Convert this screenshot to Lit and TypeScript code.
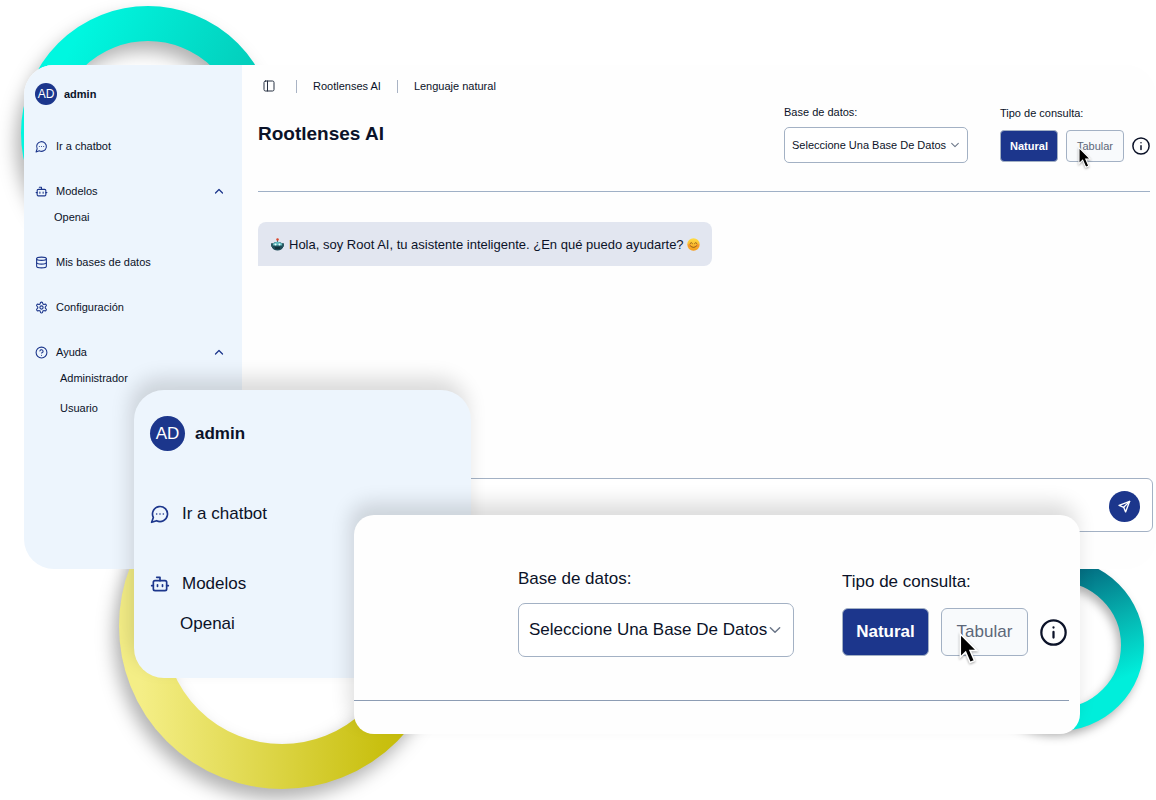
import { LitElement, html, css, svg, nothing } from "lit";
import { customElement, property } from "lit/decorators.js";

const ICONS: Record<string, unknown> = {
  chat: svg`<path d="M7.9 20A9 9 0 1 0 4 16.100L2 22Z"/><path d="M8 12h.01M12 12h.01M16 12h.01"/>`,
  bot: svg`<path d="M12 8V4H8"/><rect width="16" height="12" x="4" y="8" rx="2"/><path d="M2 14h2M20 14h2M15 13v2M9 13v2"/>`,
  database: svg`<ellipse cx="12" cy="5" rx="9" ry="3"/><path d="M3 5v14a9 3 0 0 0 18 0V5"/><path d="M3 12a9 3 0 0 0 18 0"/>`,
  settings: svg`<path d="M12.22 2h-.44a2 2 0 0 0-2 2v.18a2 2 0 0 1-1 1.730l-.43.250a2 2 0 0 1-2 0l-.15-.08a2 2 0 0 0-2.730.730l-.22.380a2 2 0 0 0 .73 2.730l.15.100a2 2 0 0 1 1 1.720v.51a2 2 0 0 1-1 1.740l-.15.090a2 2 0 0 0-.73 2.730l.22.380a2 2 0 0 0 2.730.730l.15-.08a2 2 0 0 1 2 0l.43.250a2 2 0 0 1 1 1.730V20a2 2 0 0 0 2 2h.44a2 2 0 0 0 2-2v-.18a2 2 0 0 1 1-1.730l.43-.25a2 2 0 0 1 2 0l.15.080a2 2 0 0 0 2.730-.73l.22-.39a2 2 0 0 0-.73-2.730l-.15-.08a2 2 0 0 1-1-1.740v-.5a2 2 0 0 1 1-1.740l.15-.09a2 2 0 0 0 .73-2.730l-.22-.38a2 2 0 0 0-2.730-.73l-.15.080a2 2 0 0 1-2 0l-.43-.25a2 2 0 0 1-1-1.730V4a2 2 0 0 0-2-2z"/><circle cx="12" cy="12" r="3"/>`,
  help: svg`<circle cx="12" cy="12" r="10"/><path d="M9.090 9a3 3 0 0 1 5.830 1c0 2-3 3-3 3"/><path d="M12 17h.01"/>`,
  up: svg`<path d="m5 16 7-7 7 7"/>`,
  down: svg`<path d="m4 8 8 8 8-8"/>`,
  panel: svg`<rect width="20" height="20" x="2" y="2" rx="3"/><path d="M9 2v20"/>`,
  info: svg`<circle cx="12" cy="12" r="10.800"/><path d="M12 11.500v5M12 7.500v.1"/>`,
  send: svg`<path d="M21.500 2.500 2 10l8.500 3.500L14 22z"/><path d="M21.500 2.500 10.500 13.500"/>`,
};

const icon = (name: string) =>
  html`<svg class="icon icon-${name}" viewBox="0 0 24 24" aria-hidden="true">${ICONS[name]}</svg>`;

const shared = css`
  :host {
    font-family: "Liberation Sans", Arial, sans-serif;
    color: #0b1228;
    box-sizing: border-box;
  }
  * {
    box-sizing: border-box;
  }
  .icon {
    display: block;
    flex: none;
    fill: none;
    stroke: currentColor;
    stroke-width: 2;
    stroke-linecap: round;
    stroke-linejoin: round;
  }
  button,
  select,
  input {
    font: inherit;
    color: inherit;
    margin: 0;
  }
`;

interface NavItem {
  icon: string;
  label: string;
  children?: string[];
  indent?: boolean;
}

@customElement("side-nav")
export class SideNav extends LitElement {
  @property({ attribute: false }) items: NavItem[] = [];
  @property({ type: Boolean, reflect: true }) large = false;

  static styles = [
    shared,
    css`
      :host {
        display: block;
        font-size: 11px;
        line-height: 24px;
        padding: 17px 17px 24px 11px;
      }
      .user {
        display: flex;
        align-items: center;
        gap: 7px;
        font-weight: 700;
        margin-bottom: 28px;
      }
      .avatar {
        display: grid;
        place-items: center;
        width: 22px;
        height: 22px;
        border-radius: 50%;
        background: #1c368c;
        color: #fff;
        font-size: 12px;
        font-weight: 400;
        line-height: 1;
      }
      nav {
        display: flex;
        flex-direction: column;
        gap: 21px;
      }
      .item {
        display: flex;
        align-items: center;
        width: 100%;
        height: 24px;
        gap: 8px;
        padding: 0;
        border: 0;
        background: none;
        color: inherit;
        text-decoration: none;
        text-align: left;
      }
      .label {
        flex: 1;
      }
      .icon {
        width: 13px;
        height: 13px;
        color: #1c368c;
      }
      .icon-up {
        width: 12px;
        height: 12px;
        stroke-width: 2.5;
      }
      .subs {
        display: flex;
        flex-direction: column;
        gap: 6px;
        margin-top: 2px;
        padding-left: 19px;
      }
      .subs.indent {
        padding-left: 25px;
      }
      .sub {
        color: inherit;
        text-decoration: none;
        height: 24px;
      }
      :host([large]) {
        font-size: 17px;
        padding: 26px 24px 42px 16px;
      }
      :host([large]) .user {
        gap: 10px;
        margin-bottom: 51px;
      }
      :host([large]) .avatar {
        width: 35px;
        height: 35px;
        font-size: 17px;
      }
      :host([large]) nav {
        gap: 46px;
      }
      :host([large]) .item {
        gap: 12px;
      }
      :host([large]) .icon {
        width: 20px;
        height: 20px;
      }
      :host([large]) .subs {
        margin-top: 16px;
        padding-left: 30px;
      }
    `,
  ];

  render() {
    return html`
      <div class="user"><span class="avatar">AD</span><span>admin</span></div>
      <nav>
        ${this.items.map((item) => {
          if (!item.children) {
            return html`<a class="item" href="#">${icon(item.icon)}<span class="label">${item.label}</span></a>`;
          }
          return html`<div>
            <button class="item" type="button" aria-expanded="true">
              ${icon(item.icon)}<span class="label">${item.label}</span>${this.large ? nothing : icon("up")}
            </button>
            <div class="subs ${item.indent ? "indent" : ""}">
              ${item.children.map((c) => html`<a class="sub" href="#">${c}</a>`)}
            </div>
          </div>`;
        })}
      </nav>
    `;
  }
}

@customElement("query-controls")
export class QueryControls extends LitElement {
  @property({ type: Boolean, reflect: true }) large = false;

  static styles = [
    shared,
    css`
      :host {
        display: flex;
        align-items: center;
        gap: 32px;
        font-size: 11px;
        line-height: 14px;
      }
      .field {
        display: flex;
        flex-direction: column;
        gap: 8px;
      }
      .type {
        gap: 10px;
      }
      .picker {
        display: grid;
        align-items: center;
      }
      .picker > * {
        grid-area: 1 / 1;
      }
      select {
        appearance: none;
        width: 184px;
        height: 36px;
        padding: 0 7px;
        border: 1px solid #a3b1c4;
        border-radius: 5px;
        background: #fff;
      }
      .icon-down {
        justify-self: end;
        width: 10px;
        height: 10px;
        margin-right: 8px;
        color: #6b7688;
        stroke-width: 2.5;
        pointer-events: none;
      }
      .options {
        display: flex;
        align-items: center;
        gap: 8px;
      }
      .option {
        position: relative;
        width: 58px;
        height: 32px;
        padding: 0;
        border: 1px solid #a3b1c4;
        border-radius: 4px;
        background: #f8fafc;
        color: #5c6779;
      }
      .option.active {
        background: #1c368c;
        color: #fff;
        font-weight: 700;
      }
      .cursor {
        position: absolute;
        left: 11px;
        top: 16px;
        width: 14px;
        height: 22px;
        overflow: visible;
        filter: drop-shadow(0 1px 1px rgba(0, 0, 0, 0.35));
      }
      .info {
        padding: 0;
        border: 0;
        background: none;
      }
      .icon-info {
        width: 18px;
        height: 18px;
      }
      :host([large]) {
        gap: 48px;
        font-size: 17px;
        line-height: 22px;
      }
      :host([large]) .field {
        gap: 13px;
      }
      :host([large]) .type {
        gap: 15px;
        padding-top: 2px;
      }
      :host([large]) select {
        width: 276px;
        height: 54px;
        padding: 0 10px;
        border-radius: 7px;
      }
      :host([large]) .icon-down {
        width: 14px;
        height: 14px;
        margin-right: 12px;
      }
      :host([large]) .options {
        gap: 12px;
      }
      :host([large]) .option {
        width: 87px;
        height: 48px;
        border-radius: 6px;
      }
      :host([large]) .cursor {
        left: 17px;
        top: 24px;
        width: 20px;
        height: 32px;
      }
      :host([large]) .icon-info {
        width: 27px;
        height: 27px;
      }
    `,
  ];

  render() {
    return html`
      <div class="field">
        <label for="db">Base de datos:</label>
        <div class="picker">
          <select id="db">
            <option>Seleccione Una Base De Datos</option>
          </select>
          ${icon("down")}
        </div>
      </div>
      <div class="field type" role="group" aria-labelledby="type">
        <span id="type">Tipo de consulta:</span>
        <div class="options">
          <button class="option active" type="button">Natural</button>
          <button class="option" type="button">
            Tabular
            <svg class="cursor" viewBox="0 0 20 33" aria-hidden="true">
              <path d="M1 1v24l5.500-5.300 4.600 10.800 4.600-2-4.600-10.500h6.900z" fill="#000" stroke="#fff" stroke-width="1.600"/>
            </svg>
          </button>
          <button class="info" type="button" aria-label="Información">${icon("info")}</button>
        </div>
      </div>
    `;
  }
}

const MAIN_NAV: NavItem[] = [
  { icon: "chat", label: "Ir a chatbot" },
  { icon: "bot", label: "Modelos", children: ["Openai"] },
  { icon: "database", label: "Mis bases de datos" },
  { icon: "settings", label: "Configuración" },
  { icon: "help", label: "Ayuda", children: ["Administrador", "Usuario"], indent: true },
];

@customElement("app-root")
export class AppRoot extends LitElement {
  static styles = [
    shared,
    css`
      :host {
        display: block;
        position: relative;
        min-height: 100vh;
        padding: 65px 0 0 24px;
        background: #fff;
        overflow: hidden;
      }
      .ring {
        position: absolute;
        overflow: visible;
        filter: drop-shadow(-5px 10px 9px rgba(0, 0, 0, 0.3));
      }
      .ring circle {
        fill: none;
      }
      .ring-top {
        left: 21px;
        top: 6px;
        width: 254px;
        height: 254px;
      }
      .ring-yellow {
        left: 119px;
        top: 463px;
        width: 326px;
        height: 326px;
      }
      .ring-right {
        right: 12px;
        top: 559px;
        width: 172px;
        height: 172px;
        filter: drop-shadow(-3px 5px 5px rgba(0, 0, 0, 0.3));
      }
      .window {
        position: relative;
        display: grid;
        grid-template-columns: 218px 1fr;
        min-height: 504px;
        border-radius: 30px;
        background: #fefefe;
        overflow: hidden;
      }
      .side {
        background: #edf5fd;
      }
      main {
        display: flex;
        flex-direction: column;
        padding: 0 3px 37px 16px;
      }
      .crumbs {
        display: flex;
        align-items: center;
        gap: 16px;
        height: 40px;
        padding: 2px 0 0 5px;
        font-size: 11px;
      }
      .toggle {
        padding: 0;
        margin-right: 5px;
        border: 0;
        background: none;
        color: #273042;
      }
      .icon-panel {
        width: 12px;
        height: 12px;
      }
      .bar {
        width: 1px;
        height: 13px;
        background: #a9b3c4;
      }
      .crumb {
        color: inherit;
        text-decoration: none;
      }
      .toolbar {
        display: flex;
        align-items: center;
        justify-content: space-between;
        margin-right: 3px;
        padding: 0 0 28px;
        border-bottom: 1px solid #9fb0c6;
      }
      h1 {
        margin: 0;
        font-size: 19px;
        line-height: 24px;
      }
      .bubble {
        display: flex;
        align-items: center;
        align-self: flex-start;
        height: 44px;
        margin-top: 30px;
        padding: 0 12px 0 13px;
        border-radius: 8px 8px 8px 0;
        background: #e2e6f0;
        font-size: 13px;
      }
      .emoji {
        width: 13px;
        height: 13px;
      }
      .bubble-text {
        margin: 0 3px 0 5px;
      }
      .composer {
        display: flex;
        align-items: center;
        height: 54px;
        margin-top: auto;
        padding: 2px 12px 0;
        border: 1px solid #a3b1c4;
        border-radius: 6px;
        background: #fff;
      }
      .entry {
        flex: 1;
        min-width: 0;
        height: 40px;
        border: 0;
        outline: 0;
        background: none;
        font-size: 13px;
      }
      .send {
        display: grid;
        place-items: center;
        width: 31px;
        height: 31px;
        padding: 0;
        border: 0;
        border-radius: 50%;
        background: #1c368c;
        color: #fff;
      }
      .icon-send {
        width: 13px;
        height: 13px;
        stroke-width: 2.5;
      }
      .card {
        position: absolute;
        box-shadow: -4px -12px 20px rgba(0, 0, 0, 0.14);
      }
      .card-nav {
        left: 134px;
        top: 390px;
        width: 337px;
        border-radius: 30px;
        background: #edf5fd;
      }
      .card-query {
        left: 354px;
        right: 76px;
        top: 515px;
        padding: 53px 11px 33px 0;
        border-radius: 20px;
        background: #fefefe;
      }
      .card-row {
        display: flex;
        justify-content: flex-end;
        padding: 0 2px 43px 0;
        border-bottom: 1px solid #8d9db4;
      }
    `,
  ];

  render() {
    return html`
      <svg class="ring ring-top" viewBox="0 0 254 254" aria-hidden="true">
        <defs>
          <linearGradient id="a" x1="0.1" y1="0.2" x2="0.9" y2="0.6">
            <stop offset="0" stop-color="#00f7e0" />
            <stop offset="1" stop-color="#04c8b6" />
          </linearGradient>
        </defs>
        <circle cx="127" cy="127" r="109.500" stroke="url(#a)" stroke-width="35" />
      </svg>
      <svg class="ring ring-yellow" viewBox="0 0 326 326" aria-hidden="true">
        <defs>
          <linearGradient id="b" x1="0" y1="0" x2="1" y2="0">
            <stop offset="0" stop-color="#f4ee86" />
            <stop offset="0.850" stop-color="#c9c010" />
            <stop offset="1" stop-color="#c4ba08" />
          </linearGradient>
        </defs>
        <circle cx="163" cy="163" r="140.500" stroke="url(#b)" stroke-width="45" />
      </svg>
      <svg class="ring ring-right" viewBox="0 0 172 172" aria-hidden="true">
        <defs>
          <linearGradient id="c" x1="0.4" y1="0" x2="0.75" y2="0.9">
            <stop offset="0" stop-color="#035f78" />
            <stop offset="0.500" stop-color="#05b3b0" />
            <stop offset="0.900" stop-color="#00eedb" />
          </linearGradient>
        </defs>
        <circle cx="86" cy="86" r="74.500" stroke="url(#c)" stroke-width="23" />
      </svg>

      <div class="window">
        <side-nav class="side" .items=${MAIN_NAV}></side-nav>
        <main>
          <div class="crumbs">
            <button class="toggle" type="button" aria-label="Menú">${icon("panel")}</button>
            <span class="bar"></span>
            <a class="crumb" href="#">Rootlenses AI</a>
            <span class="bar"></span>
            <a class="crumb" href="#">Lenguaje natural</a>
          </div>
          <header class="toolbar">
            <h1>Rootlenses AI</h1>
            <query-controls></query-controls>
          </header>
          <div class="bubble">
            <svg class="emoji" viewBox="0 0 26 26" aria-hidden="true">
              <path d="M13 2v6" stroke="#5b6670" stroke-width="2" />
              <circle cx="13" cy="3" r="2.500" fill="#d9452b" />
              <path d="M2 12q11-9 22 0v7q-3 6-11 6t-11-6z" fill="#1d4a55" />
              <path d="M4 11q9-7 18 0v4H4z" fill="#5fb9bd" />
              <rect x="0" y="10" width="4" height="8" rx="2" fill="#2c5a63" />
              <rect x="22" y="10" width="4" height="8" rx="2" fill="#2c5a63" />
              <circle cx="9" cy="13" r="2" fill="#e8ffff" />
              <circle cx="17" cy="13" r="2" fill="#e8ffff" />
              <path d="M8 20h10" stroke="#0e2a33" stroke-width="3" />
            </svg>
            <span class="bubble-text">Hola, soy Root AI, tu asistente inteligente. ¿En qué puedo ayudarte?</span>
            <svg class="emoji" viewBox="0 0 26 26" aria-hidden="true">
              <defs>
                <linearGradient id="s" x1="0" y1="0" x2="0" y2="1">
                  <stop offset="0" stop-color="#ffde45" />
                  <stop offset="1" stop-color="#f59a1b" />
                </linearGradient>
              </defs>
              <circle cx="13" cy="13" r="12.500" fill="url(#s)" />
              <circle cx="5" cy="15" r="3" fill="#f4713b" opacity="0.500" />
              <circle cx="21" cy="15" r="3" fill="#f4713b" opacity="0.500" />
              <path d="M6 11q2.500-4 5 0M15 11q2.500-4 5 0M7 16q6 6 12 0" fill="none" stroke="#7a4a14" stroke-width="1.600" stroke-linecap="round" />
            </svg>
          </div>
          <form class="composer">
            <input class="entry" type="text" aria-label="Mensaje" />
            <button class="send" type="button" aria-label="Enviar">${icon("send")}</button>
          </form>
        </main>
      </div>

      <side-nav class="card card-nav" large .items=${MAIN_NAV.slice(0, 2)}></side-nav>

      <section class="card card-query">
        <div class="card-row"><query-controls large></query-controls></div>
      </section>
    `;
  }
}
